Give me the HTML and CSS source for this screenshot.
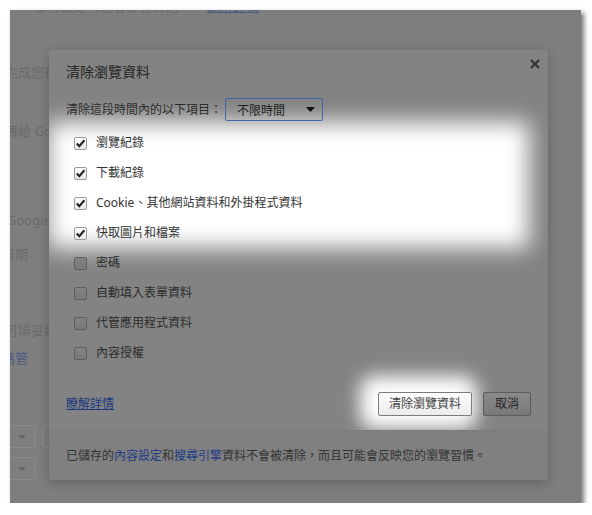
FILE: index.html
```html
<!DOCTYPE html>
<html lang="zh-Hant">
<head>
<meta charset="utf-8">
<title>清除瀏覽資料</title>
<link rel="stylesheet" href="styles.css">
</head>
<body>
<div class="screen">
  <div class="page">
    <p class="bg-line bg-top"><span class="bg-top-text">部分設定可能會影響其他</span><span class="bg-link-u">瞭解詳情</span></p>
    <p class="bg-line bg-l2">完成您在</p>
    <p class="bg-line bg-l3">傳給 Goo</p>
    <p class="bg-line bg-l4">Google</p>
    <p class="bg-line bg-l5">日期</p>
    <p class="bg-line bg-l6">可填妥網</p>
    <p class="bg-line bg-l7 bg-blue">碼管</p>
    <div class="bg-selects">
      <div class="bg-sel"><span class="bg-arrow"></span></div>
      <div class="bg-sel wide"></div>
    </div>
    <div class="bg-selects second">
      <div class="bg-sel"><span class="bg-arrow"></span></div>
    </div>
  </div>

  <div class="dialog">
    <div class="dlg-head">
      <h1 class="dlg-title">清除瀏覽資料</h1>
      <span class="dlg-close"><svg width="10" height="10" viewBox="0 0 10 10"><path d="M1 1 L9 9 M9 1 L1 9" stroke="#333" stroke-width="2.2" fill="none"/></svg></span>
    </div>
    <div class="time-row">
      <span class="time-label">清除這段時間內的以下項目：</span>
      <div class="select"><span>不限時間</span><svg class="sel-arrow" width="9" height="5" viewBox="0 0 9 5"><path d="M0 0 H9 L4.5 5 Z" fill="#111"/></svg></div>
    </div>
    <div class="list">
      <div class="lit-group">
        <div class="row"><span class="cb on"><svg width="11" height="11" viewBox="0 0 11 11"><path d="M1.8 5.6 L4.3 8.2 L9.4 2.2" stroke="#222" stroke-width="2.1" fill="none"/></svg></span><span class="row-label">瀏覽紀錄</span></div>
        <div class="row"><span class="cb on"><svg width="11" height="11" viewBox="0 0 11 11"><path d="M1.8 5.6 L4.3 8.2 L9.4 2.2" stroke="#222" stroke-width="2.1" fill="none"/></svg></span><span class="row-label">下載紀錄</span></div>
        <div class="row"><span class="cb on"><svg width="11" height="11" viewBox="0 0 11 11"><path d="M1.8 5.6 L4.3 8.2 L9.4 2.2" stroke="#222" stroke-width="2.1" fill="none"/></svg></span><span class="row-label">Cookie、其他網站資料和外掛程式資料</span></div>
        <div class="row"><span class="cb on"><svg width="11" height="11" viewBox="0 0 11 11"><path d="M1.8 5.6 L4.3 8.2 L9.4 2.2" stroke="#222" stroke-width="2.1" fill="none"/></svg></span><span class="row-label">快取圖片和檔案</span></div>
      </div>
      <div class="row dim"><span class="cb"></span><span class="row-label">密碼</span></div>
      <div class="row dim"><span class="cb"></span><span class="row-label">自動填入表單資料</span></div>
      <div class="row dim"><span class="cb"></span><span class="row-label">代管應用程式資料</span></div>
      <div class="row dim"><span class="cb"></span><span class="row-label">內容授權</span></div>
    </div>
    <div class="actions">
      <a class="learn">瞭解詳情</a>
      <div class="btns">
        <button class="btn btn-lit">清除瀏覽資料</button>
        <button class="btn btn-dim">取消</button>
      </div>
    </div>
    <div class="dlg-foot">已儲存的<span class="foot-link">內容設定</span>和<span class="foot-link">搜尋引擎</span>資料不會被清除，而且可能會反映您的瀏覽習慣。</div>
  </div>
</div>
</body>
</html>
```

FILE: styles.css
```css
* { box-sizing: border-box; }
html, body { margin: 0; padding: 0; background: #fff; }
body {
  font-family: "Noto Sans", "Noto Sans CJK TC", sans-serif;
  font-size: 12px;
}
.screen {
  position: relative;
  margin: 10px 0 0 10px;
  width: 571px;
  height: 493px;
  background: #7e7e7e;
  overflow: hidden;
  box-shadow: 3px 3px 5px rgba(0,0,0,0.55);
}
.page {
  display: flex;
  flex-direction: column;
  align-items: flex-start;
  color: #6b6b6b;
}
.bg-line {
  margin: 0;
  height: 16px;
  line-height: 16px;
  font-size: 13px;
  white-space: nowrap;
  margin-left: -5px;
}
.bg-top { margin-top: -12px; display: flex; padding-left: 30px; }
.bg-top-text { width: 172px; }
.bg-link-u { color: #4a5a80; text-decoration: underline; }
.bg-l2 { margin-top: 50px; }
.bg-l3 { margin-top: 43px; }
.bg-l4 { margin-top: 73px; margin-left: -3px; }
.bg-l5 { margin-top: 18px; margin-left: -8px; }
.bg-l6 { margin-top: 60px; }
.bg-l7 { margin-top: 12px; margin-left: -8px; }
.bg-blue { color: #4a5a85; }
.bg-selects {
  display: flex;
  gap: 6px;
  margin-top: 59px;
  margin-left: -40px;
}
.bg-selects.second { margin-top: 9px; }
.bg-sel {
  width: 66px;
  height: 23px;
  border: 1px solid #8a8a8a;
  border-radius: 2px;
  display: flex;
  align-items: center;
  justify-content: flex-end;
  padding-right: 9px;
}
.bg-sel.wide { width: 120px; }
.bg-arrow {
  width: 0; height: 0;
  border-left: 4px solid transparent;
  border-right: 4px solid transparent;
  border-top: 4px solid #666;
}

.dialog {
  position: absolute;
  z-index: 1;
  left: 39px;
  top: 40px;
  width: 499px;
  height: 430px;
  background: #838383;
  border-radius: 3px;
  overflow: hidden;
  box-shadow: 0 3px 12px rgba(0,0,0,0.22);
  display: flex;
  flex-direction: column;
  color: #2b2b2b;
}
.dlg-head {
  display: flex;
  justify-content: space-between;
  align-items: flex-start;
  padding: 12px 0 0 17px;
  height: 32px;
}
.dlg-title {
  margin: 0;
  font-size: 14px;
  font-weight: normal;
  line-height: 20px;
  color: #252525;
}
.dlg-close {
  margin-top: -3px;
  margin-right: 8px;
  width: 10px;
  height: 10px;
  display: flex;
}
.time-row {
  display: flex;
  align-items: center;
  gap: 3px;
  margin-top: 16px;
  padding-left: 17px;
  height: 23px;
}
.time-label { line-height: 16px; }
.select {
  width: 98px;
  height: 23px;
  border: 1px solid #3f66ad;
  border-radius: 2px;
  display: flex;
  align-items: center;
  justify-content: space-between;
  padding: 0 7px 0 11px;
  color: #1e1e1e;
}
.list {
  margin-top: 7px;
  margin-left: 13px;
  display: flex;
  flex-direction: column;
}
.lit-group {
  position: relative;
  width: 443px;
  color: #333;
}
.lit-group::before {
  content: "";
  position: absolute;
  top: -6px;
  bottom: 0;
  left: -14px;
  right: -24px;
  background: #fff;
  filter: blur(11px);
  z-index: -1;
}
.row {
  height: 30px;
  display: flex;
  align-items: center;
  padding-left: 12px;
  gap: 9px;
}
.row-label { line-height: 16px; }
.cb {
  width: 13px;
  height: 13px;
  border: 1px solid #9a9a9a;
  border-radius: 2px;
  background: linear-gradient(#ffffff, #e8e8e8);
  display: flex;
  align-items: center;
  justify-content: center;
}
.row.dim .cb {
  border-color: #5e5e5e;
  background: linear-gradient(#838383, #787878);
}
.row.dim { color: #2b2b2b; }
.actions {
  margin-top: 24px;
  height: 24px;
  display: flex;
  align-items: center;
  justify-content: space-between;
  padding: 0 17px;
}
.learn {
  color: #1c3a80;
  text-decoration: underline;
  line-height: 16px;
}
.btns { display: flex; gap: 11px; }
.btn {
  font-family: inherit;
  font-size: 12px;
  height: 24px;
  padding: 0 10px;
  border-radius: 2px;
  line-height: 20px;
  margin: 0;
}
.btn-lit {
  position: relative;
  width: 94px;
  border: 1px solid #7c7c7c;
  background: linear-gradient(#fdfdfd, #ececec);
  color: #444;
}
.btn-lit::before {
  content: "";
  position: absolute;
  top: -17px;
  bottom: -14px;
  left: -19px;
  right: -6px;
  background: #fff;
  border-radius: 14px;
  filter: blur(9px);
  z-index: -1;
}
.btn-dim {
  width: 48px;
  border: 1px solid #5c5c5c;
  background: linear-gradient(#8a8a8a, #797979);
  color: #232323;
}
.dlg-foot {
  margin-top: 14px;
  height: 50px;
  border-top: 1px solid #7a7a7a;
  background: #808080;
  padding-left: 17px;
  display: flex;
  align-items: center;
  color: #333;
  line-height: 16px;
}
.foot-link { color: #1d3b85; }
```
